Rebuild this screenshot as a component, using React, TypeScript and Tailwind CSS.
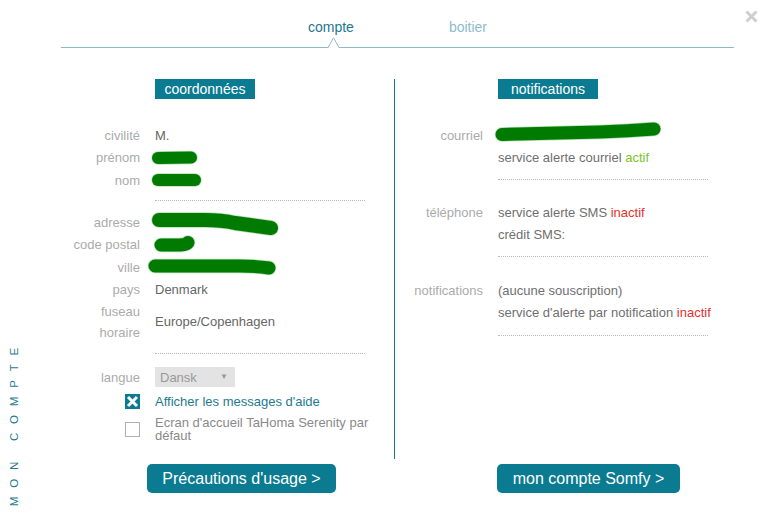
import React from 'react'

// redaction scribble drawn over a value, coords relative to the cell
function Scribble({ d, width = 12 }: { d: string; width?: number }) {
  return (
    <svg className="absolute left-0 top-0 overflow-visible" width={1} height={1}>
      <path d={d} fill="none" stroke="#6cc26c" strokeWidth={width + 1.5} strokeLinecap="round" strokeLinejoin="round" opacity={0.5} />
      <path d={d} fill="none" stroke="#007a00" strokeWidth={width} strokeLinecap="round" strokeLinejoin="round" />
    </svg>
  )
}

function LeftRow({ label, children, className = '' }: { label: React.ReactNode; children?: React.ReactNode; className?: string }) {
  return (
    <div className={`flex h-[22.5px] items-center ${className}`}>
      <div className="w-[112px] shrink-0 text-right text-[#ababab]">{label}</div>
      <div className="relative ml-[15px] flex h-full flex-1 items-center text-[#666]">
        <span>{children}</span>
      </div>
    </div>
  )
}

function RightRow({ label, children, className = '' }: { label?: React.ReactNode; children?: React.ReactNode; className?: string }) {
  return (
    <div className={`flex h-[22.5px] items-center ${className}`}>
      <div className="w-[88px] shrink-0 text-right text-[#ababab]">{label}</div>
      <div className="relative ml-[15px] flex h-full flex-1 items-center whitespace-nowrap text-[#6f6f6f]">
        <span>{children}</span>
      </div>
    </div>
  )
}

export default function App() {
  return (
    <div className="relative flex h-[521px] w-[760px] overflow-hidden bg-white font-['Liberation_Sans',Arial,sans-serif] text-[13px]">
      {/* close */}
      <svg className="absolute right-[2px] top-[10px]" width="13" height="13" viewBox="0 0 13 13">
        <path d="M1.5 1.5 L11.5 11.5 M11.5 1.5 L1.5 11.5" stroke="#cfcfcf" strokeWidth="3" />
      </svg>

      {/* side label */}
      <div className="flex w-[28px] shrink-0 flex-col items-center justify-end pb-[15px]">
        <div className="rotate-180 text-[11.5px] leading-[12px] tracking-[8.8px] text-[#1f7d92] [writing-mode:vertical-rl]">MON COMPTE</div>
      </div>

      <div className="flex flex-1 flex-col">
        {/* tabs */}
        <div className="ml-[33px] flex h-[48px] w-[673px] justify-center gap-[95px] border-b border-[#8fb9c5] text-[14px]">
          <div className="relative h-full pt-[17px] text-[#23788d]">
            compte
            <svg className="absolute bottom-[-1px] left-[20px]" width="11" height="11" viewBox="0 0 11 11">
              <polygon points="0,11 5.5,0.5 11,11" fill="white" />
              <polyline points="0,10.5 5.5,0.8 11,10.5" fill="none" stroke="#8fb9c5" strokeWidth="1" />
            </svg>
          </div>
          <div className="h-full pt-[17px] text-[#8dbdcb]">boitier</div>
        </div>

        <div className="flex pt-[31px]">
          {/* coordonnées */}
          <div className="w-[366px] shrink-0">
            <div className="h-[380px]">
              <div className="ml-[127px] h-[20px] w-[100px] bg-[#0b7b92] text-center text-[14px] leading-[20px] text-white">coordonnées</div>
              <div className="mt-[25px]">
                <LeftRow label="civilité">M.</LeftRow>
                <LeftRow label="prénom">
                  <Scribble d="M3 11 L36 10.5" width={12} />
                </LeftRow>
                <LeftRow label="nom">
                  <Scribble d="M3 11 L40 11" width={12} />
                </LeftRow>
                <div className="ml-[127px] mt-[8.5px] w-[210px] border-t border-dotted border-[#b8b8b8]" />
                <LeftRow label="adresse" className="mt-[10px]">
                  <Scribble d="M4 9 L50 9 Q66 9 80 12 L116 17" width={14} />
                </LeftRow>
                <LeftRow label="code postal">
                  <Scribble d="M6 11 L25 11 Q32 10.5 33 8.5" width={13} />
                </LeftRow>
                <LeftRow label="ville">
                  <Scribble d="M0 10 L85 10 Q100 10 114 12" width={13} />
                </LeftRow>
                <LeftRow label="pays">Denmark</LeftRow>
                <div className="flex h-[42px] items-center">
                  <div className="w-[112px] shrink-0 text-right leading-[21px] text-[#ababab]">
                    fuseau
                    <br />
                    horaire
                  </div>
                  <div className="ml-[15px] text-[#666]">Europe/Copenhagen</div>
                </div>
                <div className="ml-[127px] mt-[10px] w-[210px] border-t border-dotted border-[#b8b8b8]" />
                <LeftRow label="langue" className="mt-[12px]">
                  <span className="flex h-[20px] w-[80px] items-center justify-between bg-[#e3e3e3] pl-[5px] pr-[7px] text-[#999]">
                    <span>Dansk</span>
                    <span className="text-[8px]">▼</span>
                  </span>
                </LeftRow>
                <div className="mt-[2px] flex h-[22px] items-center">
                  <div className="flex w-[112px] shrink-0 justify-end">
                    <div className="flex h-[15px] w-[15px] items-center justify-center bg-[#0b7b92]">
                      <svg width="13" height="13" viewBox="0 0 13 13">
                        <path d="M2 2 L11 11 M11 2 L2 11" stroke="white" strokeWidth="3" />
                      </svg>
                    </div>
                  </div>
                  <div className="ml-[15px] text-[#1d7a8e]">Afficher les messages d'aide</div>
                </div>
                <div className="mt-[3.5px] flex items-center">
                  <div className="flex w-[112px] shrink-0 justify-end">
                    <div className="h-[15px] w-[15px] border border-[#b0b0b0] bg-white" />
                  </div>
                  <div className="ml-[15px] w-[222px] leading-[13px] text-[#8a8a8a]">Ecran d'accueil TaHoma Serenity par défaut</div>
                </div>
              </div>
            </div>
            <button className="ml-[119px] mt-[5px] h-[29px] w-[189px] rounded-[5px] bg-[#0b7b92] text-[16px] text-white">Précautions d'usage &gt;</button>
          </div>

          {/* notifications */}
          <div className="flex-1">
            <div className="h-[380px] border-l border-[#1a7a8d]">
              <div className="ml-[103px] h-[20px] w-[100px] bg-[#0b7b92] text-center text-[14px] leading-[20px] text-white">notifications</div>
              <div className="mt-[25px]">
                <RightRow label="courriel">
                  <Scribble d="M4 10.5 L102 8 Q130 7 156 5" width={13} />
                </RightRow>
                <RightRow>
                  service alerte courriel <span className="text-[#7ac428]">actif</span>
                </RightRow>
                <div className="ml-[103px] mt-[10px] w-[210px] border-t border-dotted border-[#b8b8b8]" />
                <RightRow label="téléphone" className="mt-[21px]">
                  service alerte SMS <span className="text-[#e5322b]">inactif</span>
                </RightRow>
                <RightRow>crédit SMS:</RightRow>
                <div className="ml-[103px] mt-[10px] w-[210px] border-t border-dotted border-[#b8b8b8]" />
                <RightRow label="notifications" className="mt-[22px]">(aucune souscription)</RightRow>
                <RightRow>
                  service d'alerte par notification <span className="text-[#e5322b]">inactif</span>
                </RightRow>
                <div className="ml-[103px] mt-[11px] w-[210px] border-t border-dotted border-[#b8b8b8]" />
              </div>
            </div>
            <button className="ml-[103px] mt-[5px] h-[29px] w-[183px] rounded-[5px] bg-[#0b7b92] text-[16px] text-white">mon compte Somfy &gt;</button>
          </div>
        </div>
      </div>
    </div>
  )
}
